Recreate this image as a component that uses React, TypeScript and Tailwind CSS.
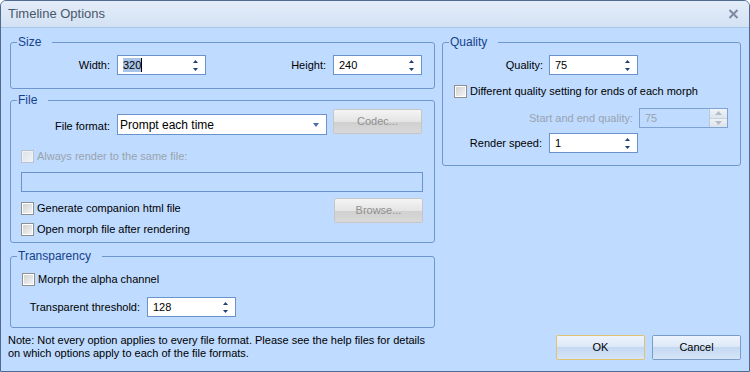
import React from "react";

const font = "font-['Liberation_Sans',Arial,sans-serif]";

const SpinArrows = ({ disabled }: { disabled?: boolean }) => {
  if (disabled) {
    return (
      <div className="flex flex-col w-[18px] h-full border-l border-[#b9c9dc]">
        <div className="flex-1 flex items-center justify-center bg-gradient-to-b from-[#f1f4f8] to-[#dde4ec] border-b border-[#c6d2e0]">
          <svg width="7" height="4" viewBox="0 0 7 4">
            <polygon points="0,4 7,4 3.5,0" fill="#b4bcc6" />
          </svg>
        </div>
        <div className="flex-1 flex items-center justify-center bg-gradient-to-b from-[#eef2f6] to-[#dbe2ea]">
          <svg width="7" height="4" viewBox="0 0 7 4">
            <polygon points="0,0 7,0 3.5,4" fill="#b4bcc6" />
          </svg>
        </div>
      </div>
    );
  }
  return (
    <div className="flex items-center pr-[7px]">
      <svg width="5" height="11" viewBox="0 0 5 11">
        <polygon points="0,3 5,3 2.5,0" fill="#1d3f75" />
        <polygon points="0,8 5,8 2.5,11" fill="#1d3f75" />
      </svg>
    </div>
  );
};

const Spin = ({
  value,
  disabled,
  selected,
}: {
  value: string;
  disabled?: boolean;
  selected?: boolean;
}) => (
  <div
    className={
      disabled
        ? "flex w-[89px] h-[20px] border border-[#7fa2d4] bg-[#bfdbff]"
        : "flex w-[89px] h-[20px] border border-[#6a93cd] bg-white"
    }
  >
    <div
      className={
        disabled
          ? "flex-1 flex items-center pl-[5px] text-[#98a3b1]"
          : "flex-1 flex items-center pl-[5px] text-black"
      }
    >
      {selected ? (
        <>
          <span className="bg-[#a8c4e9] leading-[14px]">{value}</span>
          <span className="w-[1px] h-[14px] bg-black" />
        </>
      ) : (
        value
      )}
    </div>
    <SpinArrows disabled={disabled} />
  </div>
);

const Check = ({ label, disabled }: { label: string; disabled?: boolean }) => (
  <div className="flex items-center h-[13px]">
    <div
      className={
        disabled
          ? "w-[13px] h-[13px] border border-[#b9c2cd] p-[1px] bg-[#eef1f5]"
          : "w-[13px] h-[13px] border border-[#8e8f8f] p-[1px] bg-white"
      }
    >
      <div
        className={
          disabled
            ? "w-full h-full bg-gradient-to-br from-[#dfe4ea] to-[#eef1f5]"
            : "w-full h-full bg-gradient-to-br from-[#d2d2d2] to-[#f4f4f4]"
        }
      />
    </div>
    <span className={disabled ? "ml-[3px] text-[#9aa3ad]" : "ml-[3px] text-black"}>{label}</span>
  </div>
);

const GrayButton = ({ label }: { label: string }) => (
  <div className="flex flex-col w-[89px] h-[25px] border border-[#c6c6c6] rounded-[2px] overflow-hidden">
    <div className="h-[12px] bg-gradient-to-b from-[#f4f4f4] to-[#e4e4e4]" />
    <div className="flex-1 bg-gradient-to-b from-[#d0d0d0] to-[#dadada]" />
    <div className="-mt-[24px] h-[23px] flex items-center justify-center text-[#8f8f8f]">{label}</div>
  </div>
);

const BlueButton = ({ label, primary }: { label: string; primary?: boolean }) => (
  <div
    className={
      primary
        ? "flex flex-col w-[89px] h-[25px] border border-[#e2c36c] rounded-[2px] overflow-hidden"
        : "flex flex-col w-[89px] h-[25px] border border-[#7c9cc8] rounded-[2px] overflow-hidden"
    }
  >
    <div className="h-[11px] bg-gradient-to-b from-[#eef4fc] to-[#dce8f8]" />
    <div className="flex-1 bg-gradient-to-b from-[#c4d8f2] to-[#d6e5f8]" />
    <div className="-mt-[23px] h-[23px] flex items-center justify-center text-black">{label}</div>
  </div>
);

const Legend = ({ title }: { title: string }) => (
  <legend className="ml-[6px] pl-[1px] pr-[11px] h-[12px] leading-[12px] text-[#15428b] text-[12px]">
    {title}
  </legend>
);

export default function App() {
  return (
    <div
      className={`${font} text-[11px] w-[750px] h-[372px] flex flex-col border border-[#4f6b92] rounded-t-[6px] overflow-hidden bg-[#bfdbff]`}
    >
      {/* title bar */}
      <div className="h-[27px] flex items-center justify-between pl-[7px] pr-[10px] bg-gradient-to-b from-[#e4edf9] to-[#d3e2f4] border-b border-[#aac5e8]">
        <span className="text-[13px] text-[#4b576a]">Timeline Options</span>
        <svg width="11" height="10" viewBox="0 0 11 10">
          <path d="M1.5 1 L9.5 9 M9.5 1 L1.5 9" stroke="#7c8ba1" strokeWidth="2" />
        </svg>
      </div>

      <div className="flex pl-[9px] pt-[8px] gap-[7px]">
        {/* left column */}
        <div className="w-[425px] flex flex-col">
          <fieldset className="border border-[#6f97cf] rounded-[3px] pt-[7px] pb-[13px]">
            <Legend title="Size" />
            <div className="flex items-center h-[20px]">
              <span className="w-[99px] text-right">Width:</span>
              <div className="ml-[7px]">
                <Spin value="320" selected />
              </div>
              <span className="w-[120px] text-right">Height:</span>
              <div className="ml-[7px]">
                <Spin value="240" />
              </div>
            </div>
          </fieldset>

          <fieldset className="mt-[5px] border border-[#6f97cf] rounded-[3px] pt-[3px] pb-[6px]">
            <Legend title="File" />
            <div className="flex items-start h-[26px]">
              <span className="w-[99px] text-right mt-[9px]">File format:</span>
              <div className="ml-[7px] mt-[5px] w-[210px] h-[21px] border border-[#6a93cd] bg-white flex items-center justify-between pl-[2px] pr-[7px] text-[12px]">
                <span>Prompt each time</span>
                <svg width="6" height="4" viewBox="0 0 6 4">
                  <polygon points="0,0 6,0 3,4" fill="#4a6ea8" />
                </svg>
              </div>
              <div className="ml-[6px]">
                <GrayButton label="Codec..." />
              </div>
            </div>
            <div className="mt-[15px] ml-[10px]">
              <Check label="Always render to the same file:" disabled />
            </div>
            <div className="mt-[9px] ml-[10px] w-[402px] h-[20px] border border-[#6a93cd]" />
            <div className="flex items-start mt-[6px] ml-[10px]">
              <div className="flex flex-col">
                <div className="mt-[4px]">
                  <Check label="Generate companion html file" />
                </div>
                <div className="mt-[8px]">
                  <Check label="Open morph file after rendering" />
                </div>
              </div>
              <div className="ml-auto mr-[11px]">
                <GrayButton label="Browse..." />
              </div>
            </div>
          </fieldset>

          <fieldset className="mt-[7px] border border-[#6f97cf] rounded-[3px] pt-[11px] pb-[10px]">
            <Legend title="Transparency" />
            <div className="ml-[11px]">
              <Check label="Morph the alpha channel" />
            </div>
            <div className="flex items-center h-[20px] mt-[11px]">
              <span className="w-[129px] text-right">Transparent threshold:</span>
              <div className="ml-[7px]">
                <Spin value="128" />
              </div>
            </div>
          </fieldset>

          <p className="mt-[6px] -ml-[2px] leading-[13px] text-black">
            Note: Not every option applies to every file format. Please see the help files for details
            <br />
            on which options apply to each of the file formats.
          </p>
        </div>

        {/* right column */}
        <div className="w-[299px] flex flex-col">
          <fieldset className="border border-[#6f97cf] rounded-[3px] pt-[7px] pb-[12px]">
            <Legend title="Quality" />
            <div className="flex items-center h-[20px]">
              <span className="w-[100px] text-right">Quality:</span>
              <div className="ml-[6px]">
                <Spin value="75" />
              </div>
            </div>
            <div className="mt-[10px] ml-[11px]">
              <Check label="Different quality setting for ends of each morph" />
            </div>
            <div className="flex items-center h-[20px] mt-[10px]">
              <span className="w-[190px] text-right text-[#98a3b1]">Start and end quality:</span>
              <div className="ml-[6px]">
                <Spin value="75" disabled />
              </div>
            </div>
            <div className="flex items-center h-[20px] mt-[5px]">
              <span className="w-[99px] text-right">Render speed:</span>
              <div className="ml-[7px]">
                <Spin value="1" />
              </div>
            </div>
          </fieldset>

          <div className="mt-[169px] flex justify-end gap-[7px]">
            <BlueButton label="OK" primary />
            <BlueButton label="Cancel" />
          </div>
        </div>
      </div>
    </div>
  );
}
